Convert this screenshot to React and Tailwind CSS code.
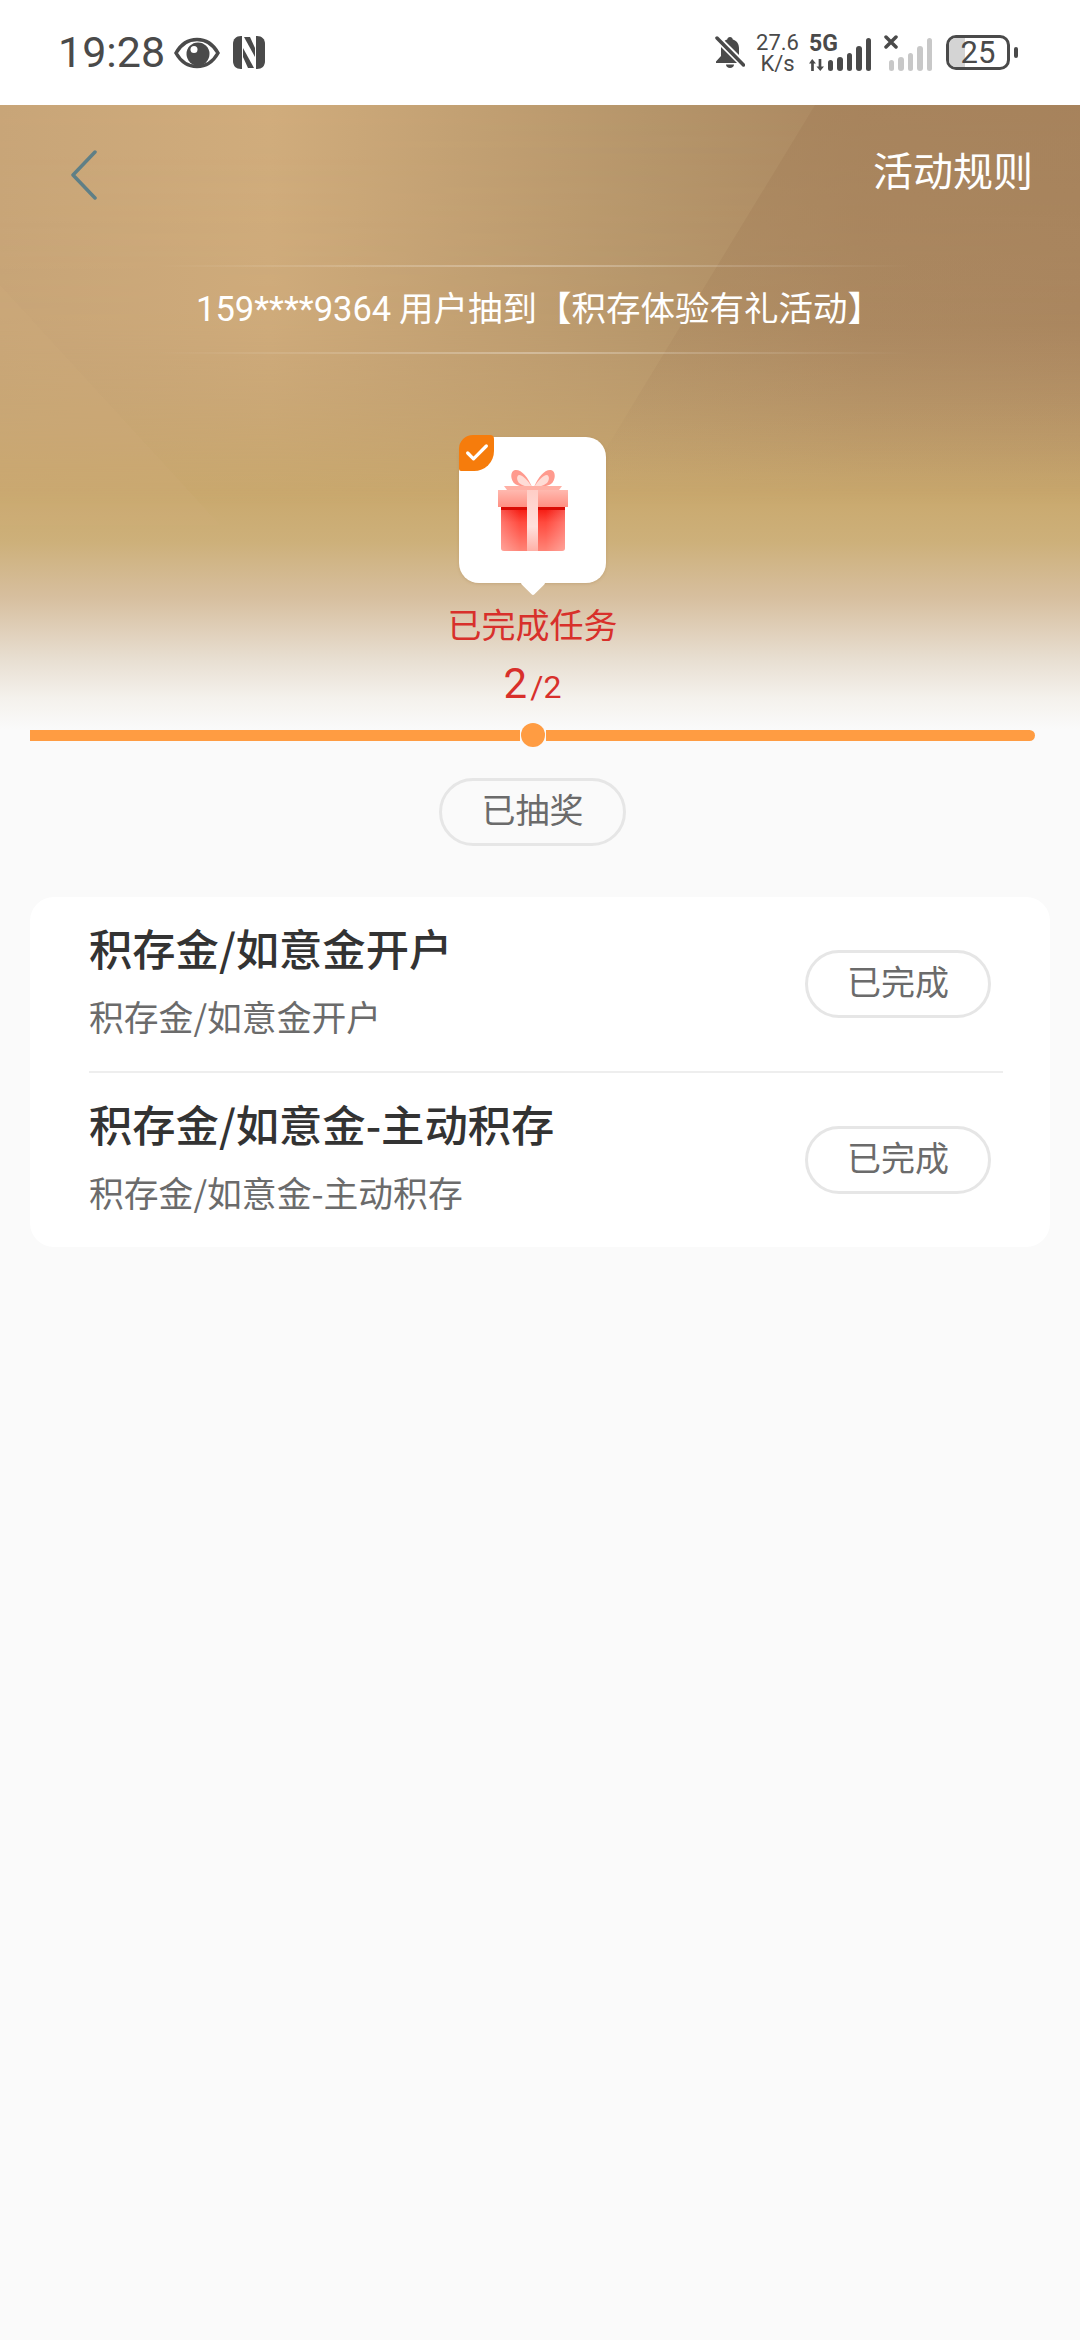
import { Check } from "lucide-react";

const cjk = { fontFamily: '"Noto Sans CJK SC", sans-serif' };

const BellOff = () => (
  <svg width="30" height="33" viewBox="0 0 30 33" fill="#4a4a4a">
    <path d="M15 1c-1.600 0-2.600 1-2.800 2.600C8.400 4.600 6 7.800 6 12v8l-5 5.500V27h28v-1.500L24 20v-8c0-4.200-2.400-7.400-6.200-8.400C17.600 2 16.600 1 15 1z" />
    <path d="M11 28.500h8c0 2-1.800 3.500-4 3.500s-4-1.500-4-3.500z" />
    <path d="M2 2l26 26" stroke="#fff" strokeWidth="7" />
    <path d="M2 2l26.500 27" stroke="#4a4a4a" strokeWidth="3.500" strokeLinecap="round" />
  </svg>
);

const Eye = () => (
  <svg width="46" height="32" viewBox="0 0 46 32">
    <path d="M2 16C7 7 14 2.500 23 2.500S39 7 44 16c-5 9-12 13.500-21 13.500S7 25 2 16z" fill="none" stroke="#4a4a4a" strokeWidth="3.500" />
    <circle cx="24" cy="17" r="11.500" fill="#4a4a4a" />
    <circle cx="20" cy="12.500" r="3.500" fill="#fff" />
  </svg>
);

const Nfc = () => (
  <svg width="32" height="33" viewBox="0 0 32 33" fill="#4a4a4a">
    <path d="M8 0h1v33H8c-5 0-8-3-8-8V8c0-5 3-8 8-8z" />
    <path d="M24 0h-1v33h1c5 0 8-3 8-8V8c0-5-3-8-8-8z" />
    <polygon points="11,1 17,1 22,12 22,21" />
    <polygon points="21,32 15,32 10,21 10,12" />
  </svg>
);

const Arrows = () => (
  <svg width="15" height="12" viewBox="0 0 14 11" fill="#4a4a4a">
    <path d="M3 0L0 4h2v7h2.500V4h2z" />
    <path d="M9 0h2.500v7H14l-3.500 4L7 7h2z" />
  </svg>
);

const Signal = ({ color }) => (
  <div className="flex items-end gap-[4px]">
    {[11, 14, 18, 25, 33].map((h, i) => (
      <div key={i} className="w-[5.500px] rounded-full" style={{ height: h, backgroundColor: color }} />
    ))}
  </div>
);

const Gift = () => (
  <svg width="70" height="82" viewBox="0 0 70 82">
    <defs>
      <linearGradient id="lid" x1="0" y1="0" x2="0" y2="1">
        <stop offset="0" stopColor="#ffb9af" />
        <stop offset="1" stopColor="#ff8f82" />
      </linearGradient>
      <linearGradient id="box" x1="0" y1="0" x2="0" y2="1">
        <stop offset="0" stopColor="#f4140c" />
        <stop offset="0.35" stopColor="#ff4a3e" />
        <stop offset="1" stopColor="#ff8477" />
      </linearGradient>
      <linearGradient id="side" x1="0" y1="0" x2="1" y2="0">
        <stop offset="0" stopColor="#ffffff" stopOpacity="0.25" />
        <stop offset="0.3" stopColor="#ffffff" stopOpacity="0" />
        <stop offset="0.7" stopColor="#ffffff" stopOpacity="0" />
        <stop offset="1" stopColor="#ffffff" stopOpacity="0.25" />
      </linearGradient>
      <linearGradient id="band" x1="0" y1="0" x2="0" y2="1">
        <stop offset="0" stopColor="#ffcdc6" />
        <stop offset="0.6" stopColor="#ffe0dc" />
        <stop offset="1" stopColor="#ffb0a7" />
      </linearGradient>
    </defs>
    <path d="M34 18C30 8 23 0 17 1c-5 1-5 10 0 14 5 3 12 3 17 3z" fill="#ff9a8e" />
    <path d="M34 18C30 12 25 6 21 6c-3 1-2 6 0 8 4 3 9 4 13 4z" fill="#ffdcd6" />
    <path d="M36 18C40 8 47 0 53 1c5 1 5 10 0 14-5 3-12 3-17 3z" fill="#ff9a8e" />
    <path d="M36 18C40 12 45 6 49 6c3 1 2 6 0 8-4 3-9 4-13 4z" fill="#ffdcd6" />
    <path d="M6 17h58l-3 4H9z" fill="#ffb0a5" />
    <path d="M3 38h64v41a3 3 0 0 1-3 3H6a3 3 0 0 1-3-3z" fill="url(#box)" />
    <path d="M3 38h64v41a3 3 0 0 1-3 3H6a3 3 0 0 1-3-3z" fill="url(#side)" />
    <path d="M0 21h70v17H0z" fill="url(#lid)" />
    <path d="M3 38h64v3H3z" fill="#d90c05" />
    <path d="M29 21h11v61H29z" fill="url(#band)" />
  </svg>
);

const DoneButton = ({ label, className = "" }) => (
  <div className={`flex h-[68px] items-center justify-center rounded-full border-[3px] border-[#e6e6e6] pb-[7px] text-[34px] text-[#6b6b6b] ${className}`}>
    {label}
  </div>
);

const TaskRow = ({ title, sub }) => (
  <div className="flex h-[174px] items-center justify-between px-[59px]">
    <div className="flex flex-col self-start pt-[25px]">
      <p className="h-[50px] text-[43.300px] leading-[50px] font-medium text-[#333333]">{title}</p>
      <p className="mt-[24px] h-[40px] text-[34.800px] leading-[40px] text-[#6b6b6b]">{sub}</p>
    </div>
    <DoneButton label="已完成" className="w-[186px] bg-white" />
  </div>
);

const BannerLine = ({ className = "" }) => (
  <div className={`h-[2px] bg-[linear-gradient(90deg,transparent,rgba(255,255,255,0.3),transparent)] ${className}`} />
);

export default function App() {
  return (
    <div style={cjk} className="flex min-h-[2340px] w-[1080px] flex-col bg-[#fafafa]">
      {/* Status bar */}
      <div className="flex h-[105px] items-center justify-between bg-white pr-[62px] pl-[58px]">
        <div className="flex items-center gap-[9px]">
          <span className="font-['Roboto'] text-[43px] leading-none text-[#4a4a4a]">19:28</span>
          <Eye />
          <span className="ml-[4px]"><Nfc /></span>
        </div>
        <div className="flex items-center">
          <BellOff />
          <div className="ml-[12px] flex w-[41px] flex-col items-center font-['Roboto'] text-[22px] leading-[21px] text-[#4a4a4a]">
            <span>27.6</span>
            <span>K/s</span>
          </div>
          <div className="relative ml-[11px] flex h-[36px] w-[62px] items-end justify-end">
            <span className="absolute top-[-2px] left-0 font-['Roboto'] text-[23px] leading-[22px] font-bold text-[#4a4a4a]">5G</span>
            <span className="absolute bottom-0 left-0 flex"><Arrows /></span>
            <Signal color="#4a4a4a" />
          </div>
          <div className="relative ml-[13px] flex h-[36px] w-[48px] items-end justify-end">
            <svg className="absolute top-0 left-0" width="14" height="14" viewBox="0 0 14 14" stroke="#4a4a4a" strokeWidth="3.500" strokeLinecap="round">
              <path d="M2 2l10 10M12 2L2 12" />
            </svg>
            <Signal color="#c8c8c8" />
          </div>
          <div className="relative ml-[14px] flex h-[35px] w-[64px] items-center justify-center overflow-hidden rounded-[10px] border-[3px] border-[#4a4a4a]">
            <div className="absolute inset-y-0 left-0 w-[16px] bg-[#d4d4d4]" />
            <span className="relative font-['Roboto'] text-[31px] leading-none text-[#4a4a4a]">25</span>
          </div>
          <div className="ml-[4px] h-[11px] w-[4px] rounded-full bg-[#4a4a4a]" />
        </div>
      </div>

      {/* Hero */}
      <div className="relative h-[624px] overflow-hidden bg-[linear-gradient(180deg,#c4a273_0%,#c4a272_40%,#c9a86d_62%,#cdb07a_70%,#d7bf9f_79%,#e8dfd2_89%,#f4f1ec_95%,#fafafa_100%)]">
        <svg className="absolute inset-0" width="1080" height="624" viewBox="0 0 1080 624">
          <defs>
            <linearGradient id="sweep" x1="0" y1="0" x2="1" y2="0">
              <stop offset="0" stopColor="#c8a578" />
              <stop offset="0.25" stopColor="#d0ac7c" />
              <stop offset="0.6" stopColor="#b5956a" />
              <stop offset="0.8" stopColor="#aa8760" />
              <stop offset="1" stopColor="#a8845e" />
            </linearGradient>
            <linearGradient id="sweepFade" x1="0" y1="0" x2="0" y2="1">
              <stop offset="0" stopColor="#fff" stopOpacity="1" />
              <stop offset="0.55" stopColor="#fff" stopOpacity="0.85" />
              <stop offset="1" stopColor="#fff" stopOpacity="0" />
            </linearGradient>
            <linearGradient id="facet" x1="0" y1="0" x2="0" y2="1">
              <stop offset="0" stopColor="#a6825b" stopOpacity="0.65" />
              <stop offset="0.6" stopColor="#a6825b" stopOpacity="0.3" />
              <stop offset="1" stopColor="#a6825b" stopOpacity="0" />
            </linearGradient>
            <mask id="sweepMask">
              <rect width="1080" height="400" fill="url(#sweepFade)" />
            </mask>
          </defs>
          <rect width="1080" height="400" fill="url(#sweep)" mask="url(#sweepMask)" />
          <polygon points="815,0 1080,0 1080,370 590,370" fill="url(#facet)" />
          <polygon points="0,180 220,420 0,420" fill="#d2b07c" opacity="0.2" />
        </svg>

        {/* Nav */}
        <div className="relative flex h-[160px] items-start justify-between pt-[45px] pr-[47px] pl-[68px]">
          <svg width="30" height="50" viewBox="0 0 30 50" fill="none" stroke="#5f7f86" strokeWidth="3.500" strokeLinecap="round" strokeLinejoin="round">
            <path d="M27 2L5 25l22 23" />
          </svg>
          <span className="-mt-[3px] text-[40px] leading-[44px] text-white">活动规则</span>
        </div>

        <div className="relative flex flex-col items-center pr-[15px]">
          {/* Winner banner */}
          <BannerLine className="w-[760px]" />
          <p className="mt-[15px] ml-[13px] h-[48px] text-[34.500px] leading-[48px] text-white">
            <span className="font-['Roboto']">159****9364</span> 用户抽到【积存体验有礼活动】
          </p>
          <BannerLine className="mt-[22px] w-[760px]" />

          {/* Gift card */}
          <div className="relative mt-[83px] flex h-[146px] w-[147px] items-center justify-center rounded-[20px] bg-white shadow-[0_1px_3px_rgba(150,110,60,0.25)]">
            <Gift />
            <div className="absolute top-[-2px] left-0 flex h-[36px] w-[35px] items-center justify-center rounded-tl-[14px] rounded-tr-[4px] rounded-br-[20px] rounded-bl-[2px] bg-[#f67c0c]">
              <Check size={28} color="#ffffff" strokeWidth={2.8} />
            </div>
            <div className="absolute bottom-[-9px] left-1/2 h-[18px] w-[18px] -translate-x-1/2 rotate-45 rounded-[2px] bg-white" />
          </div>

          {/* Task count */}
          <p className="mt-[21px] h-[40px] text-[34px] leading-[40px] text-[#d8302b]">已完成任务</p>
          <p className="mt-[20px] flex h-[40px] items-baseline font-['Roboto'] leading-[40px] text-[#d8302b]">
            <span className="text-[42px]">2</span>
            <span className="ml-[3px] text-[32px]">/2</span>
          </p>
        </div>
      </div>

      {/* Progress */}
      <div className="relative flex h-[12px] items-center pr-[45px] pl-[30px]">
        <div className="h-[11px] flex-1 bg-[#ff9c42]" />
        <div className="mx-[1px] h-[24px] w-[24px] rounded-full bg-[#ff9c42]" />
        <div className="h-[11px] w-[489px] rounded-r-full bg-[#ff9c42]" />
      </div>

      {/* Draw button */}
      <div className="mt-[37px] flex justify-center pr-[15px]">
        <DoneButton label="已抽奖" className="w-[187px]" />
      </div>

      {/* Tasks */}
      <div className="mx-[30px] mt-[51px] rounded-[24px] bg-white">
        <TaskRow title="积存金/如意金开户" sub="积存金/如意金开户" />
        <div className="mr-[47px] ml-[59px] h-[2px] bg-[#eeeeee]" />
        <TaskRow title="积存金/如意金-主动积存" sub="积存金/如意金-主动积存" />
      </div>
    </div>
  );
}
